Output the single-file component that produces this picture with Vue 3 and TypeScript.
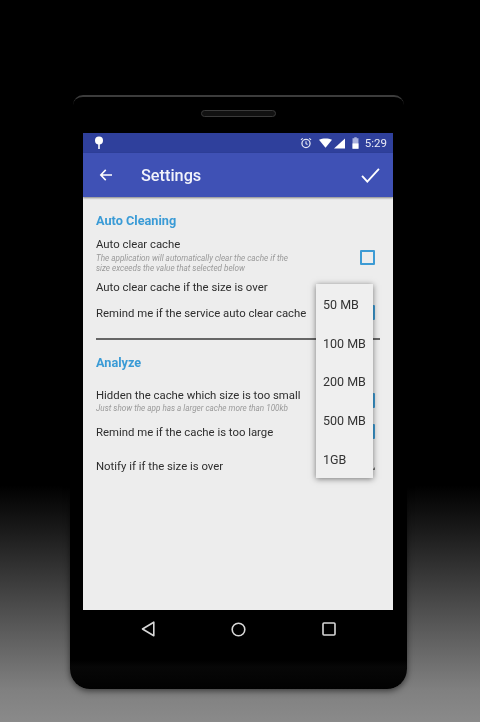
<script setup lang="ts">
const sizes: string[] = ['50 MB', '100 MB', '200 MB', '500 MB', '1GB']
</script>

<template>
  <div class="stage">
    <div class="phone">
      <div class="rim"></div>
      <div class="speaker"></div>
      <div class="screen">
        <div class="status">
          <svg class="pin" width="10" height="14" viewBox="0 0 10 14">
            <circle cx="5" cy="4.6" r="4" fill="#fff" />
            <rect x="4.2" y="8" width="1.6" height="5" fill="#fff" />
          </svg>
          <div class="status-right">
            <svg width="12" height="12" viewBox="0 0 13 13" fill="none" stroke="#e4e7f5">
              <circle cx="6.5" cy="7" r="4.4" stroke-width="1.4" />
              <path d="M6.5 4.6V7.2L8.2 8.2M1 3.2 3 1.4M12 3.2 10 1.4" stroke-width="1.2" />
            </svg>
            <svg class="wifi" width="13" height="10" viewBox="0 0 14 10">
              <path d="M0 1.6C4 -.5 10 -.5 14 1.6L7 10Z" fill="#fff" />
            </svg>
            <svg class="signal" width="11" height="11" viewBox="0 0 12 11">
              <path d="M0 11 12 0V11Z" fill="#fff" />
            </svg>
            <svg class="battery" width="7" height="12" viewBox="0 0 8 13">
              <path d="M2.6 0H5.4V1H7.4V13H.6V1H2.6Z" fill="#aab2df" />
              <path d="M.6 7H7.4V13H.6Z" fill="#fff" />
            </svg>
            <span class="time">5:29</span>
          </div>
        </div>
        <div class="appbar">
          <svg class="back" width="14" height="12" viewBox="0 0 15 14" fill="none" stroke="#fff" stroke-width="1.8">
            <path d="M14.5 7H1.5M7.2 1 1.4 7l5.8 6" />
          </svg>
          <span class="title">Settings</span>
          <svg class="check" width="19" height="15" viewBox="0 0 20 16" fill="none" stroke="#fff" stroke-width="2">
            <path d="M1 8.5 6.6 14.5 19 1" />
          </svg>
        </div>
        <div class="content">
          <div class="heading first">Auto Cleaning</div>
          <div class="row with-note auto">
            <div class="copy">
              <div class="label">Auto clear cache</div>
              <div class="note">The application will automatically clear the cache if the<br />size exceeds the value that selected below</div>
            </div>
            <span class="box"></span>
          </div>
          <div class="row over"><div class="label">Auto clear cache if the size is over</div></div>
          <div class="row remind">
            <div class="label">Remind me if the service auto clear cache</div>
            <span class="box"></span>
          </div>
          <div class="divider"></div>
          <div class="heading second">Analyze</div>
          <div class="row with-note hidden-row">
            <div class="copy">
              <div class="label">Hidden the cache which size is too small</div>
              <div class="note">Just show the app has a larger cache more than 100kb</div>
            </div>
            <span class="box"></span>
          </div>
          <div class="row large">
            <div class="label">Remind me if the cache is too large</div>
            <span class="box"></span>
          </div>
          <div class="row notify">
            <div class="label">Notify if if the size is over</div>
            <span class="caret"></span>
          </div>
          <ul class="menu">
            <li v-for="size in sizes" :key="size">{{ size }}</li>
          </ul>
        </div>
      </div>
      <div class="nav">
        <svg width="14" height="16" viewBox="0 0 14 16" fill="none" stroke="#d8d8d8" stroke-width="1.6">
          <path d="M12.8 1.2V14.8L1.5 8Z" stroke-linejoin="round" />
        </svg>
        <svg width="15" height="15" viewBox="0 0 15 15" fill="none" stroke="#d8d8d8" stroke-width="1.6">
          <circle cx="7.5" cy="7.5" r="6.3" />
        </svg>
        <svg width="14" height="14" viewBox="0 0 14 14" fill="none" stroke="#d8d8d8" stroke-width="1.6">
          <rect x="1" y="1" width="12" height="12" rx="1" />
        </svg>
      </div>
    </div>
  </div>
</template>

<style>
html, body { margin: 0; background: #000; }
</style>

<style scoped>
.stage {
  width: 480px;
  height: 722px;
  overflow: hidden;
  padding: 95px 0 0 70px;
  box-sizing: border-box;
  background: linear-gradient(to bottom, #000 0, #000 485px, #1a1a1a 530px, #4e4e4e 610px, #808080 690px, #8a8a8a 722px);
  font-family: Roboto, "Liberation Sans", sans-serif;
}
.phone {
  position: relative;
  width: 337px;
  height: 594px;
  box-sizing: border-box;
  padding-top: 38px;
  background: linear-gradient(to bottom, #000 0, #000 565px, #070707 572px, #020202 594px);
  border-radius: 12px 12px 20px 20px;
  box-shadow: 0 2px 6px rgba(0, 0, 0, 0.55);
  filter: blur(0.3px);
}
.rim {
  position: absolute;
  top: 0;
  left: 3px;
  right: 3px;
  height: 12px;
  box-sizing: border-box;
  border-top: 2px solid #3c3c3c;
  border-radius: 10px 10px 0 0;
}
.speaker {
  position: absolute;
  top: 15px;
  left: 131px;
  width: 75px;
  height: 7px;
  box-sizing: border-box;
  border: 1px solid #3a3a3a;
  border-radius: 4px;
  background: #111;
}
.screen {
  width: 310px;
  height: 477px;
  margin-left: 13px;
  display: flex;
  flex-direction: column;
  background: #ededed;
}
.status {
  height: 20px;
  flex: none;
  display: flex;
  align-items: center;
  justify-content: space-between;
  padding: 0 6px 0 11px;
  background: #2f409c;
}
.status-right { display: flex; align-items: center; }
.wifi { margin-left: 7px; }
.signal { margin-left: 2px; }
.battery { margin-left: 7px; }
.time { margin-left: 6px; font-size: 11.5px; font-weight: 400; color: #e8eaf6; }
.appbar {
  height: 44px;
  flex: none;
  display: flex;
  align-items: center;
  padding: 0 13px 0 16px;
  background: #3f51b5;
  box-shadow: 0 1px 2px rgba(0, 0, 0, 0.45);
  position: relative;
}
.title { margin-left: 28px; padding-top: 1px; flex: 1; font-size: 16.3px; font-weight: 500; color: #f2f3fb; }
.content {
  position: relative;
  flex: 1;
  padding: 0 13px;
  color: #2e2e2e;
}
.heading { font-size: 12.7px; font-weight: 700; line-height: 16px; color: #3a9bd6; }
.heading.first { padding-top: 16px; }
.heading.second { margin-top: 15px; }
.row { display: flex; justify-content: space-between; }
.label { font-size: 11.35px; line-height: 14px; white-space: nowrap; }
.note { font-size: 8.15px; line-height: 10px; font-style: italic; color: #999; margin-top: 1px; white-space: nowrap; }
.auto { margin-top: 8px; height: 37px; }
.auto .note { margin-top: 2px; }
.over { height: 26px; align-items: center; }
.remind { height: 25px; align-items: center; }
.divider { height: 1.5px; width: 284px; margin-top: 13px; background: #666; }
.with-note.hidden-row { margin-top: 17px; height: 32px; }
.large { height: 24px; align-items: center; }
.notify { margin-top: 10px; height: 24px; align-items: center; }
.box {
  box-sizing: border-box;
  width: 15px;
  height: 15px;
  margin: 0 5px 0 0;
  border: 2px solid #3d9bd4;
  border-radius: 1px;
  flex: none;
}
.auto .box { margin-top: 13px; }
.hidden-row .box { margin-top: 5px; }
.caret {
  width: 0;
  height: 0;
  margin-right: 5px;
  margin-top: 6px;
  border-left: 3px solid transparent;
  border-bottom: 3px solid #777;
}
.menu {
  position: absolute;
  top: 87px;
  left: 233px;
  width: 57px;
  height: 194px;
  margin: 0;
  padding: 1px 0 0;
  box-sizing: border-box;
  list-style: none;
  background: #efefef;
  box-shadow: 0 1px 6px rgba(0, 0, 0, 0.5);
}
.menu li {
  height: 38.7px;
  display: flex;
  align-items: center;
  padding-left: 7px;
  font-size: 12.5px;
  color: #333;
  white-space: nowrap;
}
.nav {
  height: 38px;
  display: flex;
  align-items: center;
  justify-content: space-between;
  padding: 0 71px 0 71px;
}
</style>
